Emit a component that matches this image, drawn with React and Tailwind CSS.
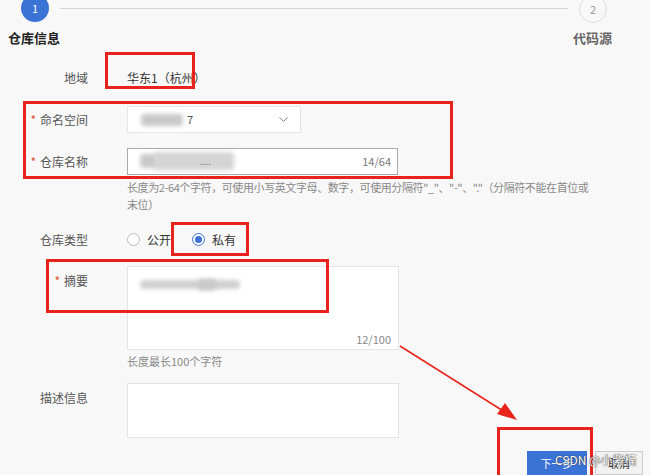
import { ChevronDown } from "lucide-react";

const FONT = { fontFamily: '"Noto Sans CJK SC", "Noto Sans", sans-serif' };

function Label({ children, required, className = "" }) {
  return (
    <div className={`w-[88px] shrink-0 text-right text-[12px] leading-[17px] text-[#555] ${className}`}>
      {required && <span className="mr-[4px] text-[#e0503a]">*</span>}
      {children}
    </div>
  );
}

function Blur({ className }) {
  return <div className={`absolute rounded-sm bg-[#c9c9c9] blur-[2px] ${className}`} />;
}

export default function App() {
  return (
    <div className="relative h-[475px] w-[650px] overflow-hidden bg-[#f8f8f8]" style={FONT}>
      {/* Stepper */}
      <div className="-mt-[6px] flex h-7 items-center pl-[21px] pr-[43px]">
        <div className="flex h-7 w-7 items-center justify-center rounded-full bg-[#3a72d6] text-[11px] leading-none text-white">
          1
        </div>
        <div className="mx-[11px] h-px flex-1 bg-[#d6d6d6]" />
        <div className="mt-[2px] flex h-7 w-7 items-center justify-center rounded-full border border-[#dcdcdc] text-[11px] leading-none text-[#999]">
          2
        </div>
      </div>

      <div className="mt-[8px] flex justify-between pl-[8px] pr-[38px]">
        <span className="text-[13px] font-bold leading-[16px] text-[#222]">仓库信息</span>
        <span className="text-[13px] font-bold leading-[16px] text-[#666]">代码源</span>
      </div>

      {/* Form */}
      <div className="flex flex-col">
        <div className="mt-[23px] flex items-center gap-[39px]">
          <Label>地域</Label>
          <span className="text-[12px] leading-[17px] text-[#333]">华东1（杭州）</span>
        </div>

        <div className="mt-[20px] flex items-center gap-[39px]">
          <Label required>命名空间</Label>
          <div className="relative flex h-[27px] w-[174px] items-center justify-between border border-[#e6e6e6] bg-white pl-[13px] pr-[9px]">
            <Blur className="left-[13px] top-[7px] h-[12px] w-[42px]" />
            <span className="relative ml-[46px] text-[11px] text-[#555]">7</span>
            <ChevronDown size={15} strokeWidth={1.5} className="text-[#777]" />
          </div>
        </div>

        <div className="mt-[15px] flex items-center gap-[39px]">
          <Label required>仓库名称</Label>
          <div className="relative flex h-[27px] w-[271px] items-center justify-end border border-[#aaa] bg-white pr-[6px]">
            <Blur className="left-[12px] top-[5px] h-[14px] w-[18px]" />
            <Blur className="left-[26px] top-[3px] h-[18px] w-[80px] bg-[#d4d4d4]" />
            <span className="absolute left-[72px] top-[4px] text-[10px] text-[#777]">....</span>
            <span className="text-[11px] text-[#777]">14/64</span>
          </div>
        </div>

        <div className="ml-[127px] mt-[4px] text-[11px] leading-[17px] tracking-[-0.4px] text-[#888]">
          <div className="whitespace-nowrap">长度为2-64个字符，可使用小写英文字母、数字，可使用分隔符"_"、"-"、"."（分隔符不能在首位或</div>
          <div>末位）</div>
        </div>

        <div className="mt-[18px] flex items-center gap-[39px]">
          <Label>仓库类型</Label>
          <div className="flex items-center text-[12px] leading-[17px] text-[#333]">
            <span className="h-[13px] w-[13px] rounded-full border border-[#bbb] bg-white" />
            <span className="ml-[7px]">公开</span>
            <span className="ml-[21px] flex h-[13px] w-[13px] items-center justify-center rounded-full border border-[#3a72d6] bg-white">
              <span className="h-[7px] w-[7px] rounded-full bg-[#3a72d6]" />
            </span>
            <span className="ml-[7px]">私有</span>
          </div>
        </div>

        <div className="mt-[18px] flex items-start gap-[39px]">
          <Label required className="pt-[6px]">摘要</Label>
          <div className="relative h-[84px] w-[272px] border border-[#e4e4e4] bg-white">
            <Blur className="left-[12px] top-[13px] h-[9px] w-[100px] bg-[#cfcfcf]" />
            <Blur className="left-[70px] top-[12px] h-[11px] w-[18px] bg-[#999]" />
            <span className="absolute bottom-[2px] right-[7px] text-[11px] text-[#888]">12/100</span>
          </div>
        </div>

        <div className="ml-[127px] mt-[3px] text-[11px] leading-[17px] text-[#888]">长度最长100个字符</div>

        <div className="mt-[13px] flex items-start gap-[39px]">
          <Label className="pt-[6px]">描述信息</Label>
          <div className="h-[55px] w-[272px] border border-[#e4e4e4] bg-white" />
        </div>

        <div className="mt-[13px] flex justify-end gap-[8px] pr-[7px]">
          <button className="h-[24px] w-[60px] bg-[#3a72d6] text-[11px] text-white">下一步</button>
          <button className="h-[24px] w-[48px] border border-[#ccc] bg-[#f2f2f2] text-[11px] text-[#333]">取消</button>
        </div>
      </div>

      {/* Annotations */}
      <div className="absolute left-[105px] top-[52px] h-[37px] w-[90px] border-[3px] border-[#e8231b]" />
      <div className="absolute left-[23px] top-[101px] h-[78px] w-[430px] border-[3px] border-[#e8231b]" />
      <div className="absolute left-[171px] top-[222px] h-[34px] w-[78px] border-[3px] border-[#e8231b]" />
      <div className="absolute left-[46px] top-[259px] h-[54px] w-[283px] border-[3px] border-[#e8231b]" />
      <div className="absolute left-[497px] top-[427px] h-[60px] w-[96px] border-[3px] border-[#e8231b]" />
      <svg className="absolute left-0 top-0" width="650" height="475">
        <line x1="400" y1="346" x2="508" y2="414" stroke="#e8231b" strokeWidth="1.5" />
        <polygon points="517,420 497,414 505,403" fill="#e8231b" />
      </svg>
      <span className="absolute left-[555px] top-[451px] text-[12px] text-white" style={{ textShadow: "0 0 1px #333, 0 0 1px #333" }}>
        CSDN @小紫楠
      </span>
    </div>
  );
}
